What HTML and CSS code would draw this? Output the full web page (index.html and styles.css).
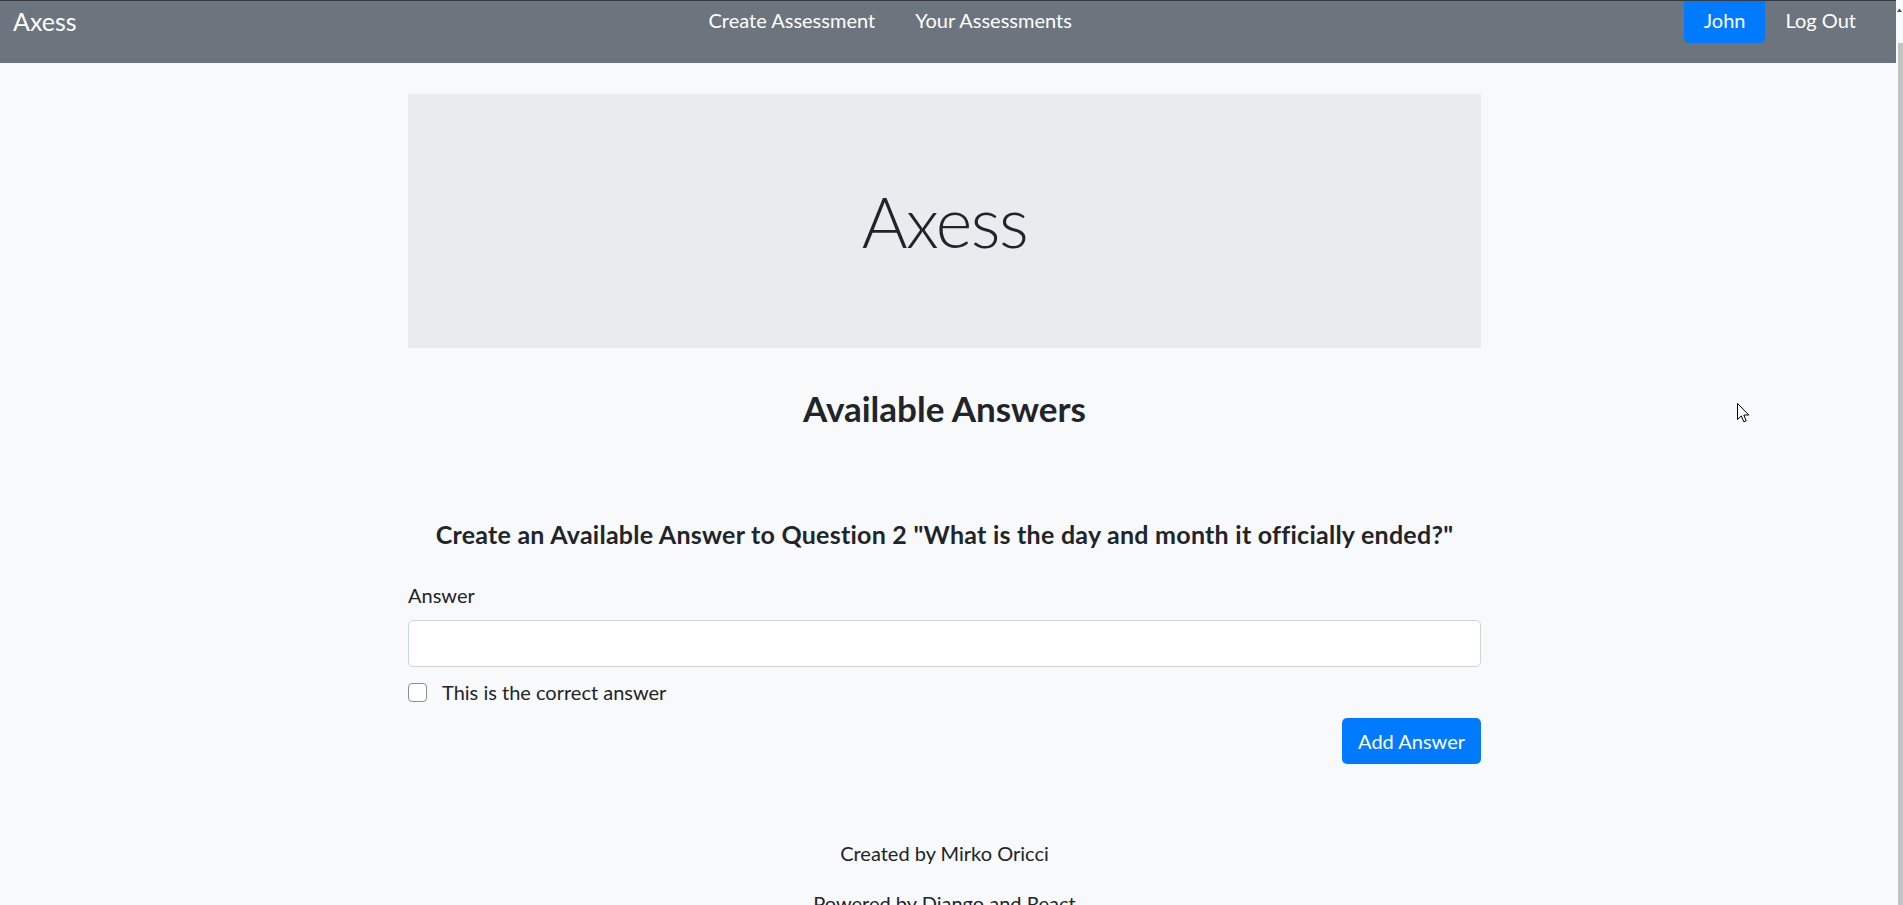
FILE: index.html
```html
<!DOCTYPE html>
<html lang="en">
<head>
<meta charset="utf-8">
<title>Axess</title>
<link rel="stylesheet" href="styles.css">
</head>
<body>
<div class="app">
  <div class="viewport">
    <nav class="navbar">
      <a class="brand" href="#">Axess</a>
      <div class="nav-center">
        <a class="nav-link" href="#">Create Assessment</a>
        <a class="nav-link" href="#">Your Assessments</a>
      </div>
      <div class="nav-right">
        <a class="nav-link user" href="#">John</a>
        <a class="nav-link" href="#">Log Out</a>
      </div>
    </nav>
    <div class="content">
      <main class="container">
        <div class="jumbotron"><h1 class="display">Axess</h1></div>
        <h3 class="title">Available Answers</h3>
        <h5 class="question">Create an Available Answer to Question 2 "What is the day and month it officially ended?"</h5>
        <form class="answer-form">
          <label class="field-label" for="answer">Answer</label>
          <input class="field-input" id="answer" type="text">
          <div class="check-row">
            <input class="check-box" id="correct" type="checkbox">
            <label class="check-label" for="correct">This is the correct answer</label>
          </div>
          <div class="actions"><button class="btn-primary" type="button">Add Answer</button></div>
        </form>
        <footer class="footer">
          <p>Created by Mirko Oricci</p>
          <p>Powered by Django and React</p>
        </footer>
      </main>
    </div>
  </div>
  <div class="scrollbar">
    <svg class="scroll-arrow" width="5" height="4" viewBox="0 0 5 4"><path d="M0 4 L2.5 0.5 L5 4 Z" fill="#505050"/></svg>
    <div class="scroll-thumb"></div>
  </div>
</div>
<svg class="cursor" width="13" height="21" viewBox="0 0 13 21"><path d="M0.5 0.5 L0.5 16.5 L4.3 12.9 L6.8 18.8 L9.2 17.8 L6.8 12 L11.8 12 Z" fill="#fff" stroke="#000" stroke-width="1" stroke-linejoin="round"/></svg>
</body>
</html>
```

FILE: styles.css
```css
* { box-sizing: border-box; }
html, body {
  margin: 0;
  padding: 0;
  height: 100%;
  overflow: hidden;
}
body {
  background: #f8f9fa;
  color: #212529;
  font-family: Lato, "Open Sans", "Liberation Sans", sans-serif;
  font-size: 20px;
  line-height: 30px;
}
.app {
  display: flex;
  height: 905px;
}
.viewport {
  flex: 1;
  min-width: 0;
  overflow: hidden;
}
.navbar {
  display: flex;
  align-items: flex-start;
  height: 63px;
  background: #6c757d;
  border-top: 1px solid #343a40;
  padding: 0 20px 0 13px;
}
.brand {
  color: #fff;
  text-decoration: none;
  font-size: 25px;
  line-height: 40px;
  margin-right: 20px;
}
.nav-center {
  flex: 1;
  display: flex;
  justify-content: center;
}
.nav-right { display: flex; }
.nav-link {
  color: #fff;
  text-decoration: none;
  font-size: 20px;
  line-height: 38px;
  padding: 0 20px 4px;
}
.user {
  background: #007bff;
  border-radius: 0 0 5px 5px;
}
.content { padding-right: 7px; }
.container {
  width: 1073px;
  margin: 31px auto 0;
}
.jumbotron {
  height: 254px;
  background: #e9ecef;
  display: flex;
  align-items: center;
  justify-content: center;
}
.display {
  margin: 0;
  font-size: 70px;
  font-weight: 300;
  line-height: 84px;
  letter-spacing: -1.5px;
}
.title {
  margin: 39px 0 0;
  text-align: center;
  font-size: 35px;
  font-weight: 700;
  line-height: 42px;
}
.question {
  margin: 90px 0 0;
  text-align: center;
  font-size: 25px;
  font-weight: 700;
  line-height: 30px;
  letter-spacing: 0.25px;
}
.answer-form {
  display: flex;
  flex-direction: column;
  margin-top: 31px;
}
.field-label { line-height: 30px; }
.field-input {
  margin-top: 10px;
  height: 47px;
  background: #fff;
  border: 1px solid #ced4da;
  border-radius: 5px;
  font: inherit;
  padding: 0 15px;
}
.check-row {
  display: flex;
  align-items: center;
  margin-top: 10px;
  height: 30px;
}
.check-box {
  appearance: none;
  -webkit-appearance: none;
  margin: 0 15px 0 0;
  width: 19px;
  height: 19px;
  background: #fff;
  border: 1px solid #8a8f94;
  border-radius: 4px;
}
.check-label { line-height: 30px; }
.actions {
  display: flex;
  justify-content: flex-end;
  margin-top: 11px;
}
.btn-primary {
  height: 46px;
  padding: 0 16px;
  background: #007bff;
  color: #fff;
  border: 0;
  border-radius: 5px;
  font: inherit;
}
.footer {
  margin-top: 74px;
  text-align: center;
}
.footer p {
  margin: 0 0 20px;
  line-height: 30px;
}
.scrollbar {
  width: 7px;
  display: flex;
  flex-direction: column;
  align-items: flex-end;
  background: #f8f9fa;
}
.scroll-arrow {
  margin: 8px 1px 0 0;
}
.scroll-thumb {
  margin-top: 31px;
  width: 5px;
  flex: 1;
  background: #c3c3c3;
}
.cursor {
  position: absolute;
  left: 1737px;
  top: 403px;
}
```
